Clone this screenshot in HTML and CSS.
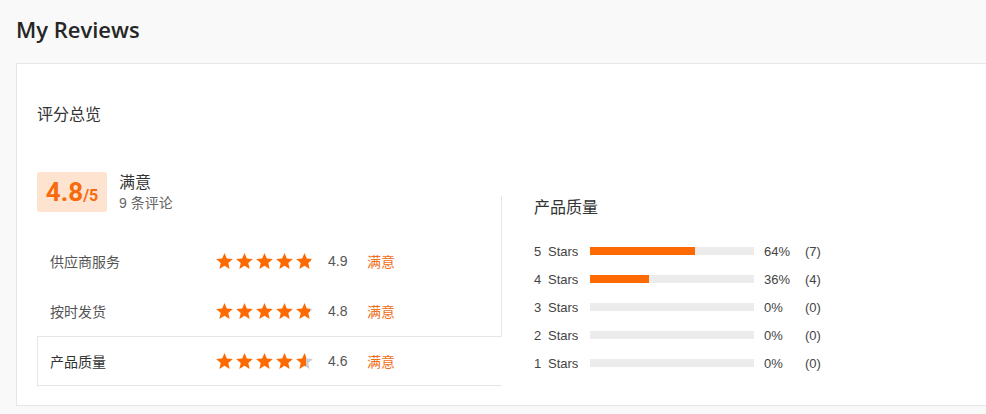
FILE: index.html
```html
<!DOCTYPE html>
<html lang="zh-CN">
<head>
<meta charset="utf-8">
<title>My Reviews</title>
<link rel="stylesheet" href="styles.css">
</head>
<body>
<svg class="defs" width="0" height="0" aria-hidden="true">
  <defs>
    <path id="star" d="M8 0 L10.2 5.27 L15.89 5.74 L11.57 9.46 L12.88 15.01 L8 12.05 L3.12 15.01 L4.43 9.46 L0.11 5.74 L5.8 5.27 Z"/>
    <linearGradient id="g90" x1="0" x2="1" y1="0" y2="0"><stop offset="0.9" stop-color="#ff6a00"/><stop offset="0.9" stop-color="#c9ced6"/></linearGradient>
    <linearGradient id="g80" x1="0" x2="1" y1="0" y2="0"><stop offset="0.82" stop-color="#ff6a00"/><stop offset="0.82" stop-color="#c9ced6"/></linearGradient>
    <linearGradient id="g60" x1="0" x2="1" y1="0" y2="0"><stop offset="0.6" stop-color="#ff6a00"/><stop offset="0.6" stop-color="#c9ced6"/></linearGradient>
  </defs>
</svg>
<h1 class="page-title">My Reviews</h1>
<section class="card">
  <h2 class="card-title">评分总览</h2>
  <div class="overview">
    <div class="left">
      <div class="summary">
        <div class="score-box"><span class="score">4.8</span><span class="score-of">/5</span></div>
        <div class="summary-text">
          <div class="summary-level">满意</div>
          <div class="summary-count">9 条评论</div>
        </div>
      </div>
      <ul class="dims">
        <li class="dim">
          <span class="dim-name">供应商服务</span>
          <span class="stars">
            <svg class="star" viewBox="0 0 16 15.1"><use href="#star" fill="#ff6a00"/></svg>
            <svg class="star" viewBox="0 0 16 15.1"><use href="#star" fill="#ff6a00"/></svg>
            <svg class="star" viewBox="0 0 16 15.1"><use href="#star" fill="#ff6a00"/></svg>
            <svg class="star" viewBox="0 0 16 15.1"><use href="#star" fill="#ff6a00"/></svg>
            <svg class="star" viewBox="0 0 16 15.1"><use href="#star" fill="url(#g90)"/></svg>
          </span>
          <span class="dim-score">4.9</span>
          <span class="dim-level">满意</span>
        </li>
        <li class="dim">
          <span class="dim-name">按时发货</span>
          <span class="stars">
            <svg class="star" viewBox="0 0 16 15.1"><use href="#star" fill="#ff6a00"/></svg>
            <svg class="star" viewBox="0 0 16 15.1"><use href="#star" fill="#ff6a00"/></svg>
            <svg class="star" viewBox="0 0 16 15.1"><use href="#star" fill="#ff6a00"/></svg>
            <svg class="star" viewBox="0 0 16 15.1"><use href="#star" fill="#ff6a00"/></svg>
            <svg class="star" viewBox="0 0 16 15.1"><use href="#star" fill="url(#g80)"/></svg>
          </span>
          <span class="dim-score">4.8</span>
          <span class="dim-level">满意</span>
        </li>
        <li class="dim active">
          <span class="dim-name">产品质量</span>
          <span class="stars">
            <svg class="star" viewBox="0 0 16 15.1"><use href="#star" fill="#ff6a00"/></svg>
            <svg class="star" viewBox="0 0 16 15.1"><use href="#star" fill="#ff6a00"/></svg>
            <svg class="star" viewBox="0 0 16 15.1"><use href="#star" fill="#ff6a00"/></svg>
            <svg class="star" viewBox="0 0 16 15.1"><use href="#star" fill="#ff6a00"/></svg>
            <svg class="star" viewBox="0 0 16 15.1"><use href="#star" fill="url(#g60)"/></svg>
          </span>
          <span class="dim-score">4.6</span>
          <span class="dim-level">满意</span>
        </li>
      </ul>
    </div>
    <div class="right">
      <h3 class="right-title">产品质量</h3>
      <ul class="dist">
        <li class="dist-row"><span class="dist-label"><span class="dist-num">5</span>Stars</span><span class="bar"><span class="bar-fill" style="width:64%"></span></span><span class="dist-pct">64%</span><span class="dist-count">(7)</span></li>
        <li class="dist-row"><span class="dist-label"><span class="dist-num">4</span>Stars</span><span class="bar"><span class="bar-fill" style="width:36%"></span></span><span class="dist-pct">36%</span><span class="dist-count">(4)</span></li>
        <li class="dist-row"><span class="dist-label"><span class="dist-num">3</span>Stars</span><span class="bar"><span class="bar-fill" style="width:0%"></span></span><span class="dist-pct">0%</span><span class="dist-count">(0)</span></li>
        <li class="dist-row"><span class="dist-label"><span class="dist-num">2</span>Stars</span><span class="bar"><span class="bar-fill" style="width:0%"></span></span><span class="dist-pct">0%</span><span class="dist-count">(0)</span></li>
        <li class="dist-row"><span class="dist-label"><span class="dist-num">1</span>Stars</span><span class="bar"><span class="bar-fill" style="width:0%"></span></span><span class="dist-pct">0%</span><span class="dist-count">(0)</span></li>
      </ul>
    </div>
  </div>
</section>
</body>
</html>
```

FILE: styles.css
```css
html, body {
  margin: 0;
  padding: 0;
  overflow: hidden;
}
body {
  background: #f9f9f9;
  font-family: "Liberation Sans", Arial, "Noto Sans CJK SC", sans-serif;
  color: #333;
  padding: 0 0 0 16px;
}
.defs {
  position: absolute;
  width: 0;
  height: 0;
}
ul {
  list-style: none;
  margin: 0;
  padding: 0;
}
.page-title {
  margin: 0;
  padding-top: 15px;
  height: 28px;
  line-height: 28px;
  font-family: "Open Sans", Roboto, sans-serif;
  font-size: 22px;
  font-weight: 600;
  color: #262626;
}
.card {
  margin-top: 20px;
  margin-right: -30px;
  background: #fff;
  border: 1px solid #e6e6e6;
  padding: 39px 20px 19px 20px;
}
.card-title {
  margin: 0 0 49px 0;
  font-size: 16px;
  line-height: 20px;
  font-weight: normal;
  color: #333;
  font-family: "Noto Sans CJK SC", sans-serif;
}
.overview {
  display: flex;
}
.left {
  width: 464px;
  flex: none;
}
.summary {
  display: flex;
  align-items: center;
  height: 40px;
  margin-bottom: 24px;
}
.score-box {
  width: 70px;
  height: 40px;
  box-sizing: border-box;
  border-radius: 3px;
  background: #ffe3d1;
  color: #f76b0c;
  display: flex;
  align-items: baseline;
  justify-content: center;
  line-height: 40px;
  font-family: Roboto, "Liberation Sans", sans-serif;
  font-weight: 700;
}
.score {
  font-size: 26px;
}
.score-of {
  font-size: 16px;
}
.summary-text {
  margin-left: 12px;
}
.summary-level {
  font-size: 16px;
  line-height: 20px;
  color: #333;
  font-family: "Noto Sans CJK SC", sans-serif;
}
.summary-count {
  font-size: 14px;
  line-height: 20px;
  margin-top: 2px;
  color: #666;
}
.dim {
  display: flex;
  align-items: center;
  height: 50px;
  box-sizing: border-box;
  border: 1px solid transparent;
  border-right: 0;
  padding-left: 12px;
  font-size: 14px;
}
.dim.active {
  position: relative;
  z-index: 1;
  background: #fff;
  border-color: #e6e6e6;
  margin-right: -1px;
}
.dim-name {
  width: 166px;
  color: #555;
  font-family: "Noto Sans CJK SC", sans-serif;
}
.dim.active .dim-name {
  color: #333;
}
.stars {
  display: flex;
  gap: 3px;
  width: 112px;
}
.star {
  width: 17px;
  height: 16px;
  display: block;
}
.dim-score {
  width: 39px;
  color: #555;
}
.dim-level {
  color: #f0701a;
  font-family: "Noto Sans CJK SC", sans-serif;
}
.right {
  flex: 1;
  margin-top: 24px;
  border-left: 1px solid #e6e6e6;
  padding-left: 32px;
}
.right-title {
  margin: 0 0 25px 0;
  font-size: 16px;
  line-height: 20px;
  font-weight: normal;
  color: #333;
  font-family: "Noto Sans CJK SC", sans-serif;
}
.dist {
  display: flex;
  flex-direction: column;
  gap: 8px;
}
.dist-row {
  display: flex;
  align-items: center;
  height: 20px;
  font-size: 13px;
  color: #444;
}
.dist-label {
  width: 56px;
}
.dist-num {
  display: inline-block;
  width: 14px;
}
.bar {
  width: 164px;
  height: 8px;
  background: #ececec;
  margin-right: 10px;
  display: flex;
}
.bar-fill {
  height: 100%;
  background: #ff6a00;
}
.dist-pct {
  width: 41px;
}
```
